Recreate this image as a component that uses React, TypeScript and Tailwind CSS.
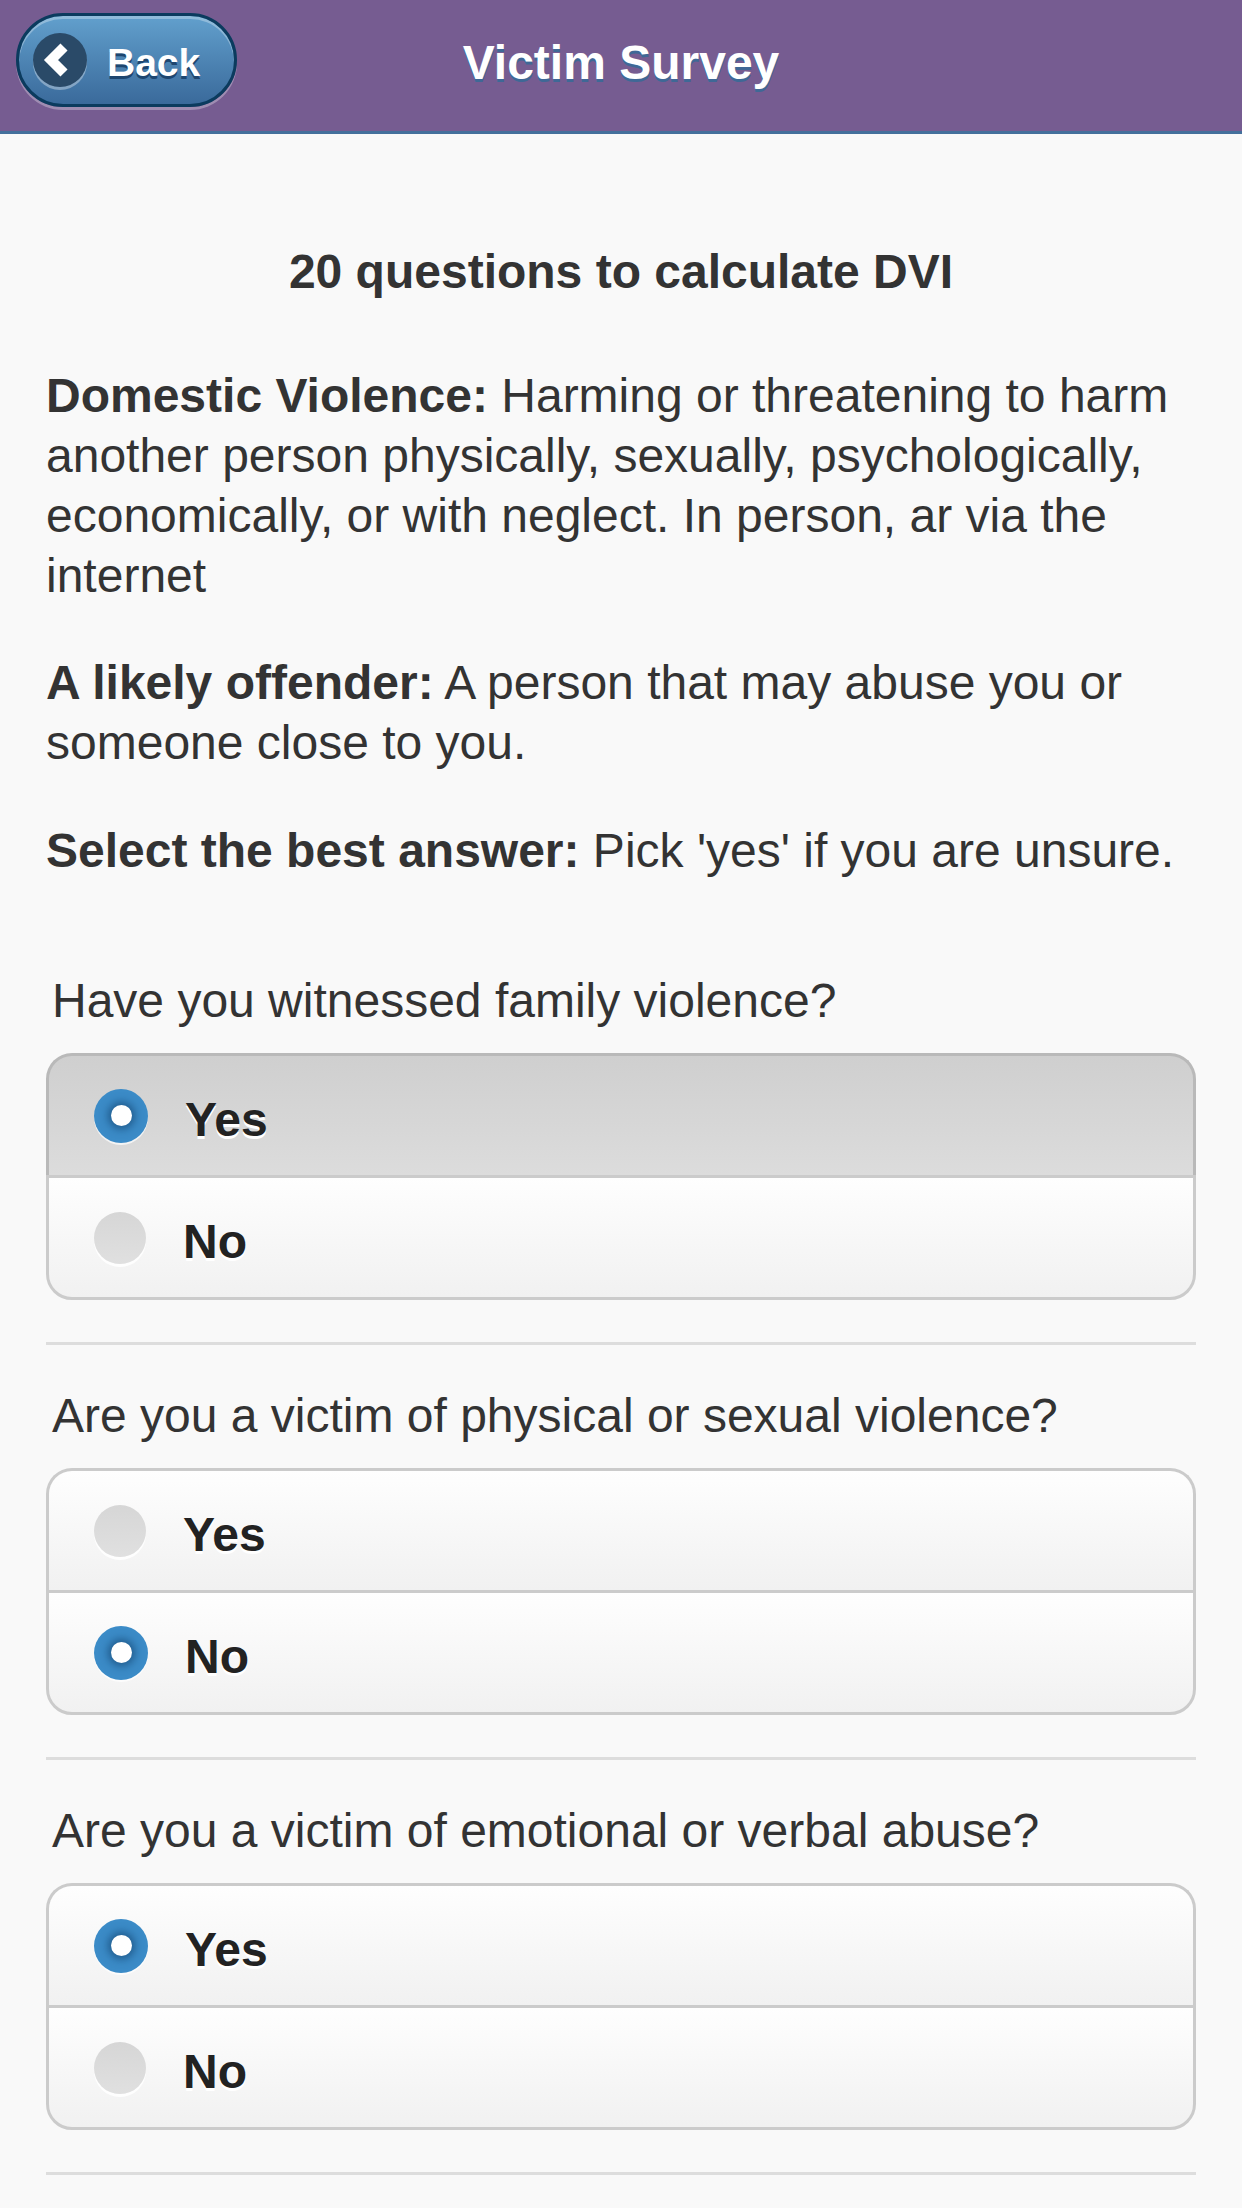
import { Fragment } from "react";

type Question = { text: string; answer: "yes" | "no"; pressed?: boolean };

const QUESTIONS: Question[] = [
  { text: "Have you witnessed family violence?", answer: "yes", pressed: true },
  { text: "Are you a victim of physical or sexual violence?", answer: "no" },
  { text: "Are you a victim of emotional or verbal abuse?", answer: "yes" },
];

function Radio({ on }: { on: boolean }) {
  if (on) {
    return (
      <span className="flex h-[54px] w-[54px] shrink-0 items-center justify-center rounded-full bg-[#3b8bc7] shadow-[0_2px_0_rgba(255,255,255,0.7)]">
        <span className="h-[21px] w-[21px] rounded-full bg-white shadow-[0_0_9px_3px_rgba(10,50,90,0.55)]" />
      </span>
    );
  }
  return (
    <span className="h-[52px] w-[52px] shrink-0 rounded-full bg-gradient-to-b from-[#d6d6d6] to-[#e0e0e0] shadow-[0_3px_0_rgba(255,255,255,0.9)]" />
  );
}

function Choice({
  label,
  on,
  pressed,
  first,
  last,
}: {
  label: string;
  on: boolean;
  pressed: boolean;
  first: boolean;
  last: boolean;
}) {
  return (
    <div
      className={
        "flex items-center border-x-[3px] border-t-[3px] pl-[45px] " +
        (last ? "h-[125px] rounded-b-[26px] border-b-[3px] " : "h-[122px] ") +
        (first ? "rounded-t-[26px] " : "") +
        (pressed
          ? "border-[#b9b9b9] bg-gradient-to-b from-[#cfcfcf] to-[#dcdcdc]"
          : "border-[#cbcbcb] bg-gradient-to-b from-[#fefefe] to-[#f1f1f1]")
      }
    >
      <Radio on={on} />
      <span className="ml-[37px] pt-[8px] text-[48px] font-bold text-[#222] [text-shadow:0_3px_0_#fff]">{label}</span>
    </div>
  );
}

export default function App() {
  return (
    <div className="min-h-[2208px] bg-[#f9f9f9] font-['Liberation_Sans',Arial,sans-serif] text-[#333]">
      <header className="relative flex h-[134px] items-center justify-center border-b-[3px] border-[#44709c] bg-[#765c91]">
        <button className="absolute left-[16px] top-[13px] flex h-[94px] w-[221px] items-center rounded-full border-[3px] border-[#0b3b5e] bg-gradient-to-b from-[#62a0cd] to-[#3a6a9b] pl-[14px] shadow-[inset_0_3px_0_rgba(255,255,255,0.3),0_3px_0_rgba(255,255,255,0.3)]">
          <span className="flex h-[54px] w-[54px] items-center justify-center rounded-full bg-[#2a4a68] shadow-[0_3px_0_rgba(255,255,255,0.35)]">
            <svg width="54" height="54" viewBox="0 0 54 54">
              <polyline points="31,14 18,27 31,40" fill="none" stroke="#fff" strokeWidth="10" strokeLinejoin="miter" strokeLinecap="butt" />
            </svg>
          </span>
          <span className="ml-[20px] pt-[7px] text-[39px] font-bold text-white [text-shadow:0_3px_0_#1d4670]">Back</span>
        </button>
        <h1 className="pb-[6px] text-[48px] font-bold text-white [text-shadow:0_3px_0_#3f6896]">Victim Survey</h1>
      </header>

      <main className="px-[46px] text-[48px] leading-[60px]">
        <h2 className="mt-[108px] text-center font-bold">20 questions to calculate DVI</h2>
        <p className="mt-[64px]">
          <b>Domestic Violence:</b> Harming or threatening to harm another person physically, sexually, psychologically,
          economically, or with neglect. In person, ar via the internet
        </p>
        <p className="mt-[47px]">
          <b>A likely offender:</b> A person that may abuse you or someone close to you.
        </p>
        <p className="mt-[48px]">
          <b>Select the best answer:</b> Pick 'yes' if you are unsure.
        </p>

        <div className="mt-[49px] flex flex-col">
          {QUESTIONS.map((q, i) => (
            <Fragment key={i}>
              <div className="mt-[41px] pl-[6px]">{q.text}</div>
              <div className="mt-[22px]">
                <Choice label="Yes" on={q.answer === "yes"} pressed={!!q.pressed} first last={false} />
                <Choice label="No" on={q.answer === "no"} pressed={false} first={false} last />
              </div>
              <div className="mt-[42px] h-[3px] bg-[#dddddd]" />
            </Fragment>
          ))}
        </div>
      </main>
    </div>
  );
}
